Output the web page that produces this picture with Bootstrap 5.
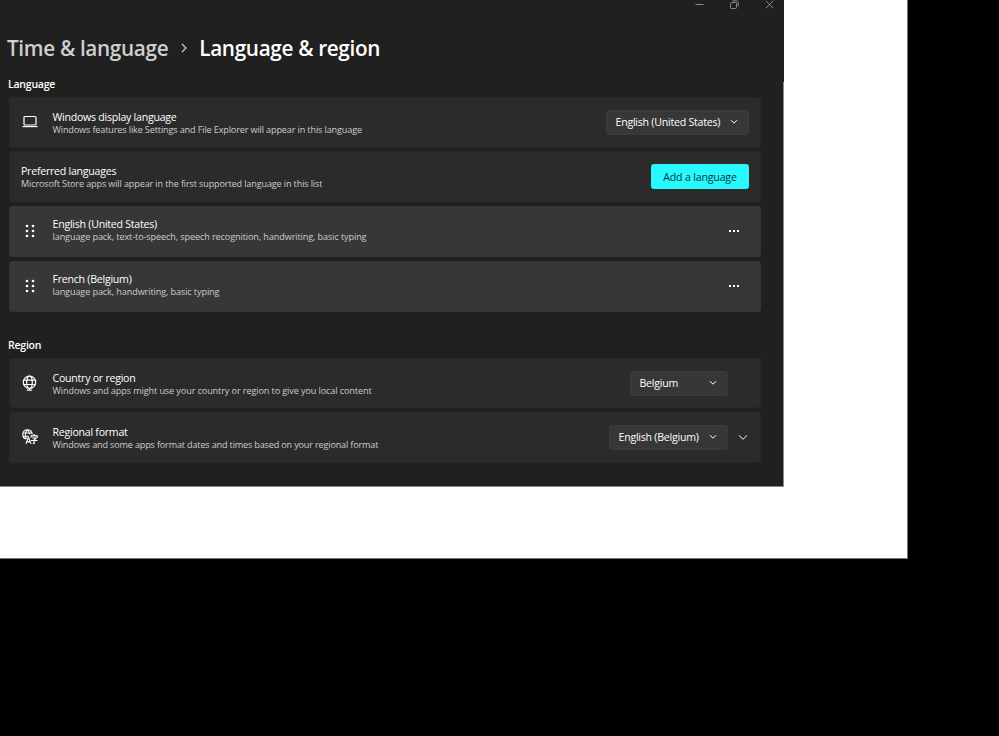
<!DOCTYPE html>
<html lang="en">
<head>
<meta charset="utf-8">
<meta name="viewport" content="width=device-width, initial-scale=1">
<title>Language &amp; region</title>
<link href="https://cdn.jsdelivr.net/npm/bootstrap@5.3.0/dist/css/bootstrap.min.css" rel="stylesheet">
<style>
body{background:#000;font-family:"Segoe UI","Open Sans","Noto Sans",sans-serif;color:#fff;overflow:hidden}
.desktop{width:908px;height:559px;background:#fff;border-right:1px solid #777;border-bottom:1px solid #777}
.window{width:784px;height:487px;background:#202020;border-bottom:1px solid #8a8a8a;border-right:1px solid;border-image:linear-gradient(#202020 83px,#8a8a8a 83px) 1;padding:0 22px 0 9px}
.captions{height:33px;gap:26px;margin-right:-12.5px;color:#8b8b8b}
.crumbs{height:30px;font-size:20.7px;font-weight:600;line-height:30px;margin-left:-2px;letter-spacing:-.32px}
.crumbs .parent{color:#cfcfcf}
.crumbs svg{margin:0 8px 0 8px}
.group-title{font-size:10.5px;font-weight:600;line-height:14px;margin:14px 0 6px -1px;letter-spacing:-.22px}
.group-title.second{margin-top:26px}
.group{gap:3.75px}
.setting{height:50.5px;background:#2b2b2b;border:1px solid #272727;border-radius:3px;padding:0 11px 0 11px}
.setting.item{background:#373737;border-color:#343434;height:51.25px}
.copy{padding-top:2px}
.item .copy{padding:0 0 2px}
.setting .ico{width:16px;height:16px;margin:0 15px 0 .5px;flex:none}
.t{font-size:10.6px;line-height:14px;color:#fff;white-space:nowrap;letter-spacing:-.25px}
.d{font-size:9.1px;line-height:12.5px;color:#cbcbcb;white-space:nowrap;letter-spacing:-.14px}
.d.loose{letter-spacing:-.105px}
.d.tight{letter-spacing:-.17px}
.pick{height:25px;background:#373737;border:1px solid #3b3b3b;border-radius:3px;font-size:10.6px;line-height:1;color:#fff;padding:0 10px 0 8.5px;letter-spacing:-.24px}
.pick.wide{width:143px}
.pick.mid{width:119px}
.pick.short{width:98px;margin-right:21px}
.accent{height:25px;width:98px;background:#29f8ff;color:#003b3d;border:0;border-radius:3px;font-size:10.6px;line-height:1;padding:1px 0 0;letter-spacing:-.18px}
svg{display:block;fill:none;stroke:currentColor;flex:none}
.expand{margin:0 1px 0 10px}
</style>
</head>
<body>
<div class="desktop">
<main class="window">
  <div class="captions d-flex justify-content-end align-items-start">
    <svg width="9" height="10" viewBox="0 0 9 10"><path d="M.5 4.5h8"/></svg>
    <svg width="9" height="10" viewBox="0 0 9 10"><rect x=".5" y="2.5" width="6" height="6" rx="1"/><path d="M2.5.8h4a1.7 1.7 0 0 1 1.7 1.7v4"/></svg>
    <svg width="9" height="10" viewBox="0 0 9 10"><path d="M.8.8l7.4 7.4M8.2.8L.8 8.2"/></svg>
  </div>
  <nav class="crumbs d-flex align-items-center">
    <span class="parent">Time &amp; language</span>
    <svg width="15" height="10" viewBox="0 0 15 10"><path d="M6 1l4 4-4 4" stroke="#ccc" stroke-width="1.2"/></svg>
    <span>Language &amp; region</span>
  </nav>
  <h2 class="group-title">Language</h2>
  <section class="group d-flex flex-column">
    <div class="setting d-flex align-items-center">
      <svg class="ico" viewBox="0 0 16 16"><rect x="2" y="2.5" width="12" height="8.5" rx="1" stroke-width="1.2"/><path d="M.5 12.6h15" stroke-width="1.2"/></svg>
      <div class="copy flex-grow-1"><div class="t">Windows display language</div><div class="d">Windows features like Settings and File Explorer will appear in this language</div></div>
      <button class="btn pick wide d-flex align-items-center justify-content-between"><span>English (United States)</span><svg width="8" height="6" viewBox="0 0 8 6"><path d="M1 1.2l3 3 3-3"/></svg></button>
    </div>
    <div class="setting d-flex align-items-center">
      <div class="copy flex-grow-1"><div class="t">Preferred languages</div><div class="d">Microsoft Store apps will appear in the first supported language in this list</div></div>
      <button class="btn accent">Add a language</button>
    </div>
    <div class="setting item d-flex align-items-center">
      <svg class="ico" viewBox="0 0 16 16"><g fill="#fff" stroke="none"><circle cx="5" cy="3" r="1.3"/><circle cx="11" cy="3" r="1.3"/><circle cx="5" cy="8" r="1.3"/><circle cx="11" cy="8" r="1.3"/><circle cx="5" cy="13" r="1.3"/><circle cx="11" cy="13" r="1.3"/></g></svg>
      <div class="copy flex-grow-1"><div class="t">English (United States)</div><div class="d loose">language pack, text-to-speech, speech recognition, handwriting, basic typing</div></div>
      <svg class="me-2" width="13" height="4" viewBox="0 0 13 4"><path d="M1 2h2M5 2h2M9 2h2" stroke-width="2"/></svg>
    </div>
    <div class="setting item d-flex align-items-center">
      <svg class="ico" viewBox="0 0 16 16"><g fill="#fff" stroke="none"><circle cx="5" cy="3" r="1.3"/><circle cx="11" cy="3" r="1.3"/><circle cx="5" cy="8" r="1.3"/><circle cx="11" cy="8" r="1.3"/><circle cx="5" cy="13" r="1.3"/><circle cx="11" cy="13" r="1.3"/></g></svg>
      <div class="copy flex-grow-1"><div class="t">French (Belgium)</div><div class="d loose">language pack, handwriting, basic typing</div></div>
      <svg class="me-2" width="13" height="4" viewBox="0 0 13 4"><path d="M1 2h2M5 2h2M9 2h2" stroke-width="2"/></svg>
    </div>
  </section>
  <h2 class="group-title second">Region</h2>
  <section class="group d-flex flex-column">
    <div class="setting d-flex align-items-center">
      <svg class="ico" viewBox="0 0 16 16"><g stroke-width="1.2"><circle cx="7.5" cy="7.3" r="6.2"/><ellipse cx="7.5" cy="7.3" rx="2.8" ry="6.2"/><path d="M1.7 5.1h11.6M1.7 9.5h11.6M4.8 15.2h5.4M7.5 13.5v2"/></g></svg>
      <div class="copy flex-grow-1"><div class="t">Country or region</div><div class="d loose">Windows and apps might use your country or region to give you local content</div></div>
      <button class="btn pick short d-flex align-items-center justify-content-between"><span>Belgium</span><svg width="8" height="6" viewBox="0 0 8 6"><path d="M1 1.2l3 3 3-3"/></svg></button>
    </div>
    <div class="setting d-flex align-items-center">
      <svg class="ico" viewBox="0 0 16 16"><path stroke-width="1.15" d="M10.2 5.2A4.7 4.7 0 1 0 4.2 10M5.5 1C3 3 3 7 4.5 10M5.8 1C7 2 7.5 3.5 7.6 5.2M1 4h9M1 7.2h5M4 14.8l2.5-6.6L9 14.8M4.8 12.8h3.4M9.2 8.6V6.8h6v1.8M12.2 5v1.8M10.2 9h4l-2 1.8v3.6h-1.4M9 11.5h6.6"/></svg>
      <div class="copy flex-grow-1"><div class="t">Regional format</div><div class="d tight">Windows and some apps format dates and times based on your regional format</div></div>
      <button class="btn pick mid d-flex align-items-center justify-content-between"><span>English (Belgium)</span><svg width="8" height="6" viewBox="0 0 8 6"><path d="M1 1.2l3 3 3-3"/></svg></button>
      <svg class="expand" width="10" height="7" viewBox="0 0 10 7"><path d="M1 1.3l4 4 4-4"/></svg>
    </div>
  </section>
</main>
</div>
<script src="https://cdn.jsdelivr.net/npm/bootstrap@5.3.0/dist/js/bootstrap.bundle.min.js"></script>
</body>
</html>
